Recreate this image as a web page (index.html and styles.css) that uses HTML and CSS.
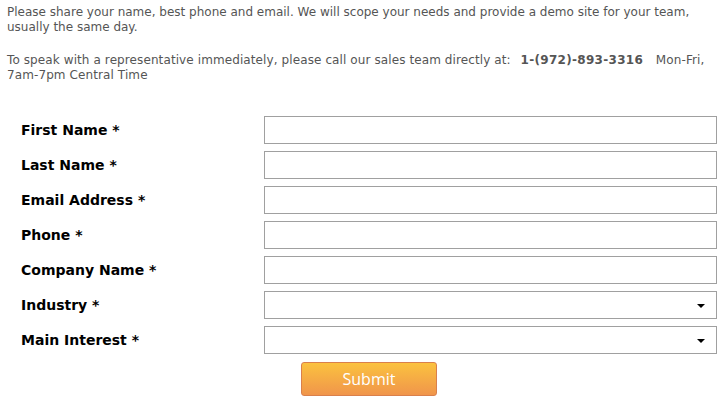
FILE: index.html
```html
<!DOCTYPE html>
<html lang="en">
<head>
    <meta charset="UTF-8">
    <title>Request a Demo</title>
    <link rel="stylesheet" href="styles.css">
</head>
<body>

    <!-- Intro text -->
    <div class="intro">
        <p>Please share your name, best phone and email. We will scope your needs and provide a demo site for your team, usually the same day.</p>
        <p>To speak with a representative immediately, please call our sales team directly at: &nbsp;<strong>1-(972)-893-3316</strong> &nbsp; Mon-Fri, 7am-7pm Central Time</p>
    </div>

    <!-- Demo request form -->
    <form class="demo-form">
        <label for="first_name">First Name *</label>
        <input type="text" id="first_name">

        <label for="last_name">Last Name *</label>
        <input type="text" id="last_name">

        <label for="email">Email Address *</label>
        <input type="text" id="email">

        <label for="phone">Phone *</label>
        <input type="text" id="phone">

        <label for="company">Company Name *</label>
        <input type="text" id="company">

        <label for="industry">Industry *</label>
        <div class="select-box" id="industry"><span class="arrow"></span></div>

        <label for="interest">Main Interest *</label>
        <div class="select-box" id="interest"><span class="arrow"></span></div>

        <div class="actions">
            <button type="button" class="btn-submit">Submit</button>
        </div>
    </form>

</body>
</html>
```

FILE: styles.css
```css
/* General */
body {
    margin: 0;
    font-family: 'DejaVu Sans', Verdana, sans-serif;
    background: #fff;
}

/* Intro */
.intro {
    padding: 5px 7px 0;
    color: #555;
    font-size: 12px;
    line-height: 15px;
}

.intro p {
    margin: 0 0 18px;
}

.intro p:last-child {
    margin-bottom: 0;
    letter-spacing: 0.1px;
}

.intro strong {
    font-weight: bold;
    letter-spacing: 0.3px;
    margin: 0 1px 0 2px;
}

/* Form */
.demo-form {
    display: grid;
    grid-template-columns: 243px 453px;
    row-gap: 7px;
    padding: 33px 0 0 21px;
}

.demo-form label {
    font-size: 14px;
    font-weight: bold;
    color: #000;
    display: flex;
    align-items: center;
}

.demo-form input,
.select-box {
    box-sizing: border-box;
    height: 28px;
    margin: 0;
    border: 1px solid #a0a0a0;
    background: #fff;
}

.select-box {
    position: relative;
}

.select-box .arrow {
    position: absolute;
    right: 11px;
    top: 12px;
    border-left: 4px solid transparent;
    border-right: 4px solid transparent;
    border-top: 4px solid #000;
}

/* Submit */
.actions {
    grid-column: 2;
    padding: 1px 0 0 37px;
}

.btn-submit {
    width: 136px;
    height: 34px;
    border: 1px solid #d9804c;
    border-radius: 3px;
    background: linear-gradient(to bottom, #fbc23f, #f0954b);
    color: #fff;
    font-family: 'Open Sans', sans-serif;
    font-size: 16px;
    cursor: pointer;
}
```
